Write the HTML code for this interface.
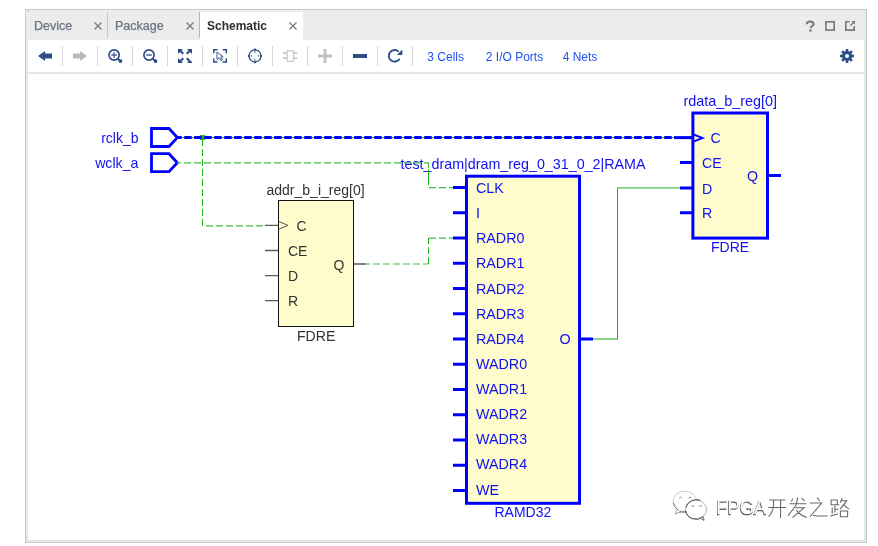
<!DOCTYPE html>
<html><head><meta charset="utf-8">
<style>
html,body{margin:0;padding:0;background:#fff;width:878px;height:546px;overflow:hidden}
svg{display:block;font-family:"Liberation Sans",sans-serif;will-change:transform}
</style></head>
<body>
<svg width="878" height="546" viewBox="0 0 878 546">
<!-- panel frame -->
<rect x="25" y="9" width="842" height="534" fill="#c9c9c9"/>
<rect x="26" y="10" width="840" height="532" fill="#e6e6e6"/>
<rect x="26" y="10" width="839" height="30" fill="#ececec"/>
<rect x="28" y="40" width="836" height="32" fill="#fff"/>
<rect x="28" y="74" width="836" height="466" fill="#fff"/>
<rect x="28" y="10" width="1" height="2" fill="#bdbdbd"/>

<!-- tabs -->
<g font-size="12.5" fill="#6b7383" stroke="#6b7383" stroke-width="0.25">
  <text x="34" y="30">Device</text>
  <text x="115" y="30">Package</text>
</g>
<rect x="107" y="12" width="1" height="26" fill="#c8c8c8"/>
<rect x="199" y="12" width="1" height="26" fill="#b8b8b8"/>
<rect x="200" y="12" width="103" height="28" fill="#fff"/>
<text x="207" y="30" font-size="12" font-weight="bold" fill="#2e2e2e">Schematic</text>
<g stroke="#7a7a7a" stroke-width="1.3" fill="none">
  <path d="M94.5 22.5l7 7M101.5 22.5l-7 7"/>
  <path d="M186.5 22.5l7 7M193.5 22.5l-7 7"/>
  <path d="M289.5 22.5l7 7M296.5 22.5l-7 7"/>
</g>
<!-- right tab icons -->
<path d="M806.8 24.3C806.8 22 808.4 21.4 810.2 21.4C812.2 21.4 813.6 22.4 813.6 24C813.6 25.9 810.8 26.2 810.6 28.2" fill="none" stroke="#777" stroke-width="2"/>
<rect x="809.3" y="29.5" width="2.4" height="2" fill="#777"/>
<rect x="825.9" y="21.8" width="8.3" height="8.3" fill="none" stroke="#777" stroke-width="1.6"/>
<path d="M849.5 21.8H845.8V30.1H854.2V26.2" fill="none" stroke="#777" stroke-width="1.6"/>
<path d="M850.5 25.5L854.8 21.2" stroke="#777" stroke-width="1.4"/>
<path d="M851.5 21H855V24.5Z" fill="#777"/>

<!-- toolbar separators -->
<g fill="#d6d6d6">
  <rect x="62" y="46" width="1" height="20"/>
  <rect x="97" y="46" width="1" height="20"/>
  <rect x="132" y="46" width="1" height="20"/>
  <rect x="167" y="46" width="1" height="20"/>
  <rect x="202" y="46" width="1" height="20"/>
  <rect x="237" y="46" width="1" height="20"/>
  <rect x="272" y="46" width="1" height="20"/>
  <rect x="307" y="46" width="1" height="20"/>
  <rect x="342" y="46" width="1" height="20"/>
  <rect x="377" y="46" width="1" height="20"/>
  <rect x="412" y="46" width="1" height="20"/>
</g>
<!-- toolbar icons -->
<path d="M38 56L45 51V53.5H52V58.5H45V61Z" fill="#2d4d87"/>
<path d="M87 56L80 51V53.5H73V58.5H80V61Z" fill="#b9b9b9"/>
<g fill="none" stroke="#2d4d87" stroke-width="1.7">
  <circle cx="114.1" cy="55" r="5.1"/>
  <circle cx="149" cy="55" r="5.1"/>
</g>
<g fill="none" stroke="#4a6598" stroke-width="1.5">
  <path d="M111.3 55h5.6M114.1 52.2v5.6"/>
  <path d="M146.2 55h5.6"/>
</g>
<path d="M117.8 58.7L120.3 61.1" stroke="#2d4d87" stroke-width="2"/>
<circle cx="120.4" cy="61.1" r="1.9" fill="#2d4d87"/>
<path d="M152.8 58.7L155.4 61.1" stroke="#2d4d87" stroke-width="2"/>
<circle cx="155.5" cy="61.1" r="1.9" fill="#2d4d87"/>
<!-- fit icon -->
<g fill="#2d4d87">
  <path d="M178 49h5l-1.5 1.5 2.5 2.5-1.5 1.5-2.5-2.5-2 2z"/>
  <path d="M192 49h-5l1.5 1.5-2.5 2.5 1.5 1.5 2.5-2.5 2 2z"/>
  <path d="M178 63h5l-1.5-1.5 2.5-2.5-1.5-1.5-2.5 2.5-2-2z"/>
  <path d="M192 63h-5l1.5-1.5-2.5-2.5 1.5-1.5 2.5 2.5 2 2z"/>
</g>
<!-- select area icon -->
<g fill="none" stroke="#2d4d87" stroke-width="1.5">
  <path d="M213.8 53.3v-3.5h3.7M222.6 49.8h3.7v3.5M226.3 58.6v3.5h-3.7M217.5 62.1h-3.7v-3.5"/>
</g>
<path d="M217 52L223.2 56.9H220.9L222.4 59.9L220.9 60.6L219.4 57.6L217 59.6Z" fill="#fff" stroke="#3a5890" stroke-width="1"/>
<!-- crosshair -->
<circle cx="255" cy="55.9" r="6" fill="none" stroke="#2d4d87" stroke-width="1.25"/>
<g fill="#2d4d87">
  <rect x="254" y="48.6" width="2" height="1.8"/>
  <rect x="254" y="61.4" width="2" height="1.8"/>
  <rect x="248" y="54.9" width="1.8" height="2"/>
  <rect x="260.2" y="54.9" width="1.8" height="2"/>
</g>
<g fill="#5f78a5">
  <rect x="254.3" y="51.2" width="1.4" height="1.5"/>
  <rect x="254.3" y="59.2" width="1.4" height="1.5"/>
  <rect x="250.6" y="55.2" width="1.5" height="1.4"/>
  <rect x="257.9" y="55.2" width="1.5" height="1.4"/>
</g>
<!-- component icon gray -->
<rect x="287.2" y="50.8" width="6.3" height="10.6" fill="none" stroke="#cdcdcd" stroke-width="1.3"/>
<path d="M283 53h4M283 58h4M293.5 53h3.7M293.5 58h3.7" stroke="#cdcdcd" stroke-width="1.8"/>
<!-- plus gray -->
<path d="M318 56h14M325 49v14" stroke="#c2c2c2" stroke-width="3"/>
<!-- minus -->
<rect x="353" y="54" width="14" height="4" fill="#2d4d87"/>
<!-- refresh -->
<path d="M399.6 58.7A5.8 5.8 0 1 1 398.7 51.7" fill="none" stroke="#2d4d87" stroke-width="1.9"/>
<path d="M402.3 49.6V55H396.9Z" fill="#2d4d87"/>
<!-- links -->
<g font-size="12" fill="#1f50f2">
  <text x="427.3" y="61">3 Cells</text>
  <text x="485.8" y="61">2 I/O Ports</text>
  <text x="562.7" y="61">4 Nets</text>
</g>
<!-- gear -->
<g transform="translate(847 56)" fill="#2d4d87">
  <circle r="5"/>
  <rect x="-1.3" y="-7" width="2.6" height="14"/>
  <rect x="-1.3" y="-7" width="2.6" height="14" transform="rotate(45)"/>
  <rect x="-1.3" y="-7" width="2.6" height="14" transform="rotate(90)"/>
  <rect x="-1.3" y="-7" width="2.6" height="14" transform="rotate(135)"/>
  <circle r="2.1" fill="#fff"/>
</g>

<!-- ports -->
<g fill="none" stroke="#0000ff" stroke-linejoin="miter">
  <path d="M151.5 128.5H169L177.3 137.6L169 146.5H151.5Z" stroke-width="2.8"/>
  <path d="M151.5 153.7H169L177.3 162.8L169 171.7H151.5Z" stroke-width="2.8"/>
</g>
<g font-size="14" fill="#1010f0" text-anchor="end" transform="translate(0 0.6)">
  <text x="138.5" y="142">rclk_b</text>
  <text x="138.5" y="167.2" font-size="14.2">wclk_a</text>
</g>

<!-- addr_b_i_reg[0] -->
<rect x="278.5" y="200.5" width="75" height="126" fill="#fefccd" stroke="#111" stroke-width="1"/>
<g stroke="#5a5a5a" stroke-width="1.3">
  <path d="M265 225.4H278M265 250.5H278M265 275.6H278M265 300.6H278M354 264H366"/>
</g>
<path d="M278.5 221.4L288 225.4L278.5 229.4" fill="none" stroke="#555" stroke-width="1"/>
<g font-size="14" fill="#333" transform="translate(0 0.6)">
  <text x="296.5" y="230.5">C</text>
  <text x="288" y="255.6">CE</text>
  <text x="288" y="280.7">D</text>
  <text x="288" y="305.7">R</text>
  <text x="333.5" y="269">Q</text>
  <text x="266.5" y="194.3">addr_b_i_reg[0]</text>
  <text x="297" y="340" font-size="14.1">FDRE</text>
</g>

<!-- RAMD32 -->
<rect x="466.5" y="176.2" width="113" height="327.1" fill="#fefccd" stroke="#0000ff" stroke-width="3"/>
<g stroke="#0000ff" stroke-width="3">
  <path d="M453 187.6H466M453 212.8H466M453 238.1H466M453 263.3H466M453 288.6H466M453 313.8H466M453 339.0H466M453 364.3H466M453 389.5H466M453 414.8H466M453 440.0H466M453 465.2H466M453 490.5H466M581 339H593"/>
</g>
<g font-size="14.3" fill="#1010f0" transform="translate(0 0.6)">
  <text x="476" y="192.5">CLK</text>
  <text x="476" y="217.6">I</text>
  <text x="476" y="242.8">RADR0</text>
  <text x="476" y="267.9">RADR1</text>
  <text x="476" y="293.0">RADR2</text>
  <text x="476" y="318.1">RADR3</text>
  <text x="476" y="343.3">RADR4</text>
  <text x="476" y="368.4">WADR0</text>
  <text x="476" y="393.5">WADR1</text>
  <text x="476" y="418.7">WADR2</text>
  <text x="476" y="443.8">WADR3</text>
  <text x="476" y="468.9">WADR4</text>
  <text x="476" y="494.1">WE</text>
  <text x="559.5" y="343.1">O</text>
  <text x="400.5" y="168.2">test_dram|dram_reg_0_31_0_2|RAMA</text>
  <text x="494.5" y="516.8" font-size="14">RAMD32</text>
</g>

<!-- rdata_b_reg[0] -->
<rect x="692.9" y="113" width="74.6" height="125.1" fill="#fefccd" stroke="#0000ff" stroke-width="3"/>
<g stroke="#0000ff" stroke-width="3">
  <path d="M680 162.5H692M680 187.9H692M680 212.8H692M768 175.6H781"/>
</g>
<path d="M694 134.6L702.5 138L694 141.4" fill="none" stroke="#0000ff" stroke-width="2"/>
<g font-size="14.2" fill="#1010f0" transform="translate(0 0.6)">
  <text x="710.5" y="142">C</text>
  <text x="702" y="167.4">CE</text>
  <text x="702" y="193">D</text>
  <text x="702" y="217.8">R</text>
  <text x="747" y="180.8">Q</text>
  <text x="683.5" y="105.8" font-size="14.4">rdata_b_reg[0]</text>
  <text x="711" y="251.5" font-size="14">FDRE</text>
</g>

<!-- ===== schematic ===== -->
<!-- rclk_b net: green base + blue dashes -->
<path d="M177 137.5H691" stroke="#22b022" stroke-width="1"/>
<rect x="200" y="135" width="5" height="5" fill="#22b022"/>
<path d="M177 137.6H674" stroke="#0000ff" stroke-width="3" stroke-dasharray="7.5 2.5" stroke-dashoffset="2.8"/>
<path d="M674 137.6H692" stroke="#0000ff" stroke-width="3"/>

<!-- green dashed nets: verticals saturated, horizontals lighter -->
<g fill="none" stroke-width="1">
  <path d="M202.5 139V226" stroke="#1ab31a" stroke-dasharray="7 3" stroke-dashoffset="0"/>
  <path d="M203 225.8H265" stroke="#45bd45" stroke-width="1.2" stroke-dasharray="7 3" stroke-dashoffset="-3"/>
  <path d="M177 162.8H428.5" stroke="#45bd45" stroke-width="1.2" stroke-dasharray="7 3" stroke-dashoffset="3"/>
  <path d="M428.5 162.8V187.6" stroke="#1ab31a" stroke-dasharray="5 1.5 16 3"/>
  <path d="M428.5 187.6H453" stroke="#45bd45" stroke-width="1.2" stroke-dasharray="7 3" stroke-dashoffset="-0.5"/>
  <path d="M366 264H428.5" stroke="#45bd45" stroke-width="1.2" stroke-dasharray="7 3" stroke-dashoffset="3"/>
  <path d="M428.5 264V238.1" stroke="#1ab31a" stroke-dasharray="7 3"/>
  <path d="M428.5 238.1H453" stroke="#45bd45" stroke-width="1.2" stroke-dasharray="7 3" stroke-dashoffset="-0.5"/>
  <!-- solid net O -> D -->
  <path d="M593 339H617.5" stroke="#4cbf4c" stroke-width="1.3"/>
  <path d="M617.5 339.5V187.9" stroke="#1ab31a"/>
  <path d="M617 187.9H680" stroke="#4cbf4c" stroke-width="1.3"/>
</g>

<path d="M202.5 135V140" stroke="#1ab31a" stroke-width="1"/>
<!-- watermark -->
<g fill="none" stroke-linecap="round">
  <ellipse cx="684.8" cy="501.4" rx="11.8" ry="10.2" stroke="#c4c4c4" stroke-width="0.9"/>
  <path d="M673.5 503A11.8 10.2 0 0 0 678 510" stroke="#777" stroke-width="0.9"/>
  <path d="M676.5 510L675.5 514L680 512" stroke="#999" stroke-width="0.9"/>
  <ellipse cx="696" cy="509.5" rx="10.6" ry="9.6" fill="#fff" stroke="#b0b0b0" stroke-width="0.9"/>
  <path d="M700 500.2A10.6 9.6 0 0 0 686 507M685.6 511A10.6 9.6 0 0 0 703 517" stroke="#4a4a4a" stroke-width="1"/>
  <path d="M680 512H685.6" stroke="#555" stroke-width="1"/>
  <path d="M701 518.5L704 520.5L703.5 517" stroke="#555" stroke-width="0.9" fill="#fff"/>
  <path d="M679.5 498l1 -1 1 1M689 498a1 1 0 0 1 2 0M691.8 506.5a1 1 0 0 1 2 0M699.5 506.5a1 1 0 0 1 2 0" stroke="#777" stroke-width="0.8"/>
</g>
<g font-size="19.6">
  <text transform="translate(715.8 514.9) scale(0.936 1)" fill="#5a5a5a" stroke="#5a5a5a" stroke-width="0.6">FPGA</text>
  <text transform="translate(716.3 514.4) scale(0.936 1)" fill="#fff">FPGA</text>
</g>
<g fill="none" stroke="#666" stroke-width="1.05" stroke-linecap="round" transform="translate(0 0.3)">
  <!-- 开 -->
  <path d="M769.5 499.7H785M768.5 507.1H785.6M773.5 499.7V505.2Q773 512 768.8 516.2M780.6 499.7V517.3"/>
  <!-- 发 -->
  <path d="M792.5 498.6L791.6 501M797.7 497.5L796 505.2M790 503.5H805.9M802 498L804.3 500.5M796 505.2L788.3 515.1M796 507.4H804.3L792.7 517M796.6 510.1Q800 515 806.5 517"/>
  <!-- 之 -->
  <path d="M817.3 497.5L819.5 500.2M810.2 502.7H821.7L810.2 516.2M813.5 515.1Q820 516 827.2 515.6"/>
  <!-- 路 -->
  <path d="M831.1 504.5V499.7H837.3V504.2M831.1 504.4H838.8M832.2 507.4V512.9M834.9 505.7V511.8M834.9 509H838.2M830.5 515.6L837.7 513.7M842.1 498L840.4 501.9M841 500.4H846.8L840.4 508.5M843.2 504.1L848.7 508.5M840.4 510.7H847.6V516.5H840.4Z"/>
</g>
</svg>
</body></html>
